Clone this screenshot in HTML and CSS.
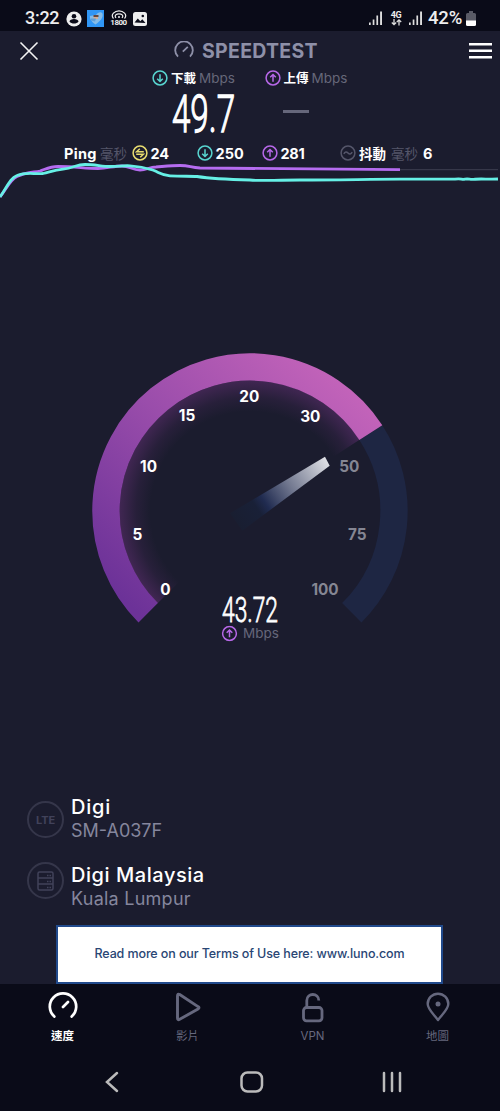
FILE: index.html
```html
<!DOCTYPE html>
<html lang="zh-Hant">
<head>
<meta charset="utf-8">
<title>Speedtest</title>
<link rel="stylesheet" href="styles.css">
</head>
<body>
<svg class="defs" width="0" height="0">
  <symbol id="down" viewBox="0 0 16 16"><circle cx="8" cy="8" r="6.9"/><path d="M8 4.2v7.2M5.2 8.7 8 11.5l2.8-2.8"/></symbol>
  <symbol id="up" viewBox="0 0 16 16"><circle cx="8" cy="8" r="6.9"/><path d="M8 11.8V4.6M5.2 7.3 8 4.5l2.8 2.8"/></symbol>
  <symbol id="swap" viewBox="0 0 16 16"><circle cx="8" cy="8" r="6.9"/><path d="M11.800 6.800H4.600L7.800 3.800M4.200 9.200h7.200l-3.200 3"/></symbol>
  <symbol id="wave" viewBox="0 0 16 16"><circle cx="8" cy="8" r="6.9"/><path d="M3.800 8.800c1.200-2.300 2.800-2.300 4.200-.8s3 1.500 4.200-.8"/></symbol>
</svg>
<div class="phone">
  <div class="status">
    <span class="clock">3:22</span>
    <svg class="s-user" width="16" height="16" viewBox="0 0 16 16"><circle cx="8" cy="8" r="7.600" fill="#eee"/><circle cx="8" cy="5.300" r="2.300" fill="#0a0b18"/><path d="M3.500 10.800c0-3.700 9-3.700 9 0-2 2.400-7 2.400-9 0z" fill="#0a0b18"/></svg>
    <svg class="s-app" width="17" height="17" viewBox="0 0 17 17"><rect width="17" height="17" fill="#3096f5"/><path d="M9 5c2-3 5-3.500 6.500-1.500 1 4-2 7.500-7 11C4.500 12 2.500 8.500 3 6z" fill="#86bce8"/><path d="M6.500 5h5v2h-5z" fill="#65483f"/><path d="M6.500 7h4.500v2H6.500z" fill="#d5ad93"/><path d="M4 8.500h5l-1 3-4-1z" fill="#5f9fd8"/></svg>
    <span class="s-wifi">
      <svg width="16" height="9" viewBox="0 0 16 9" fill="none" stroke="#eee" stroke-width="1.200"><path d="M2.500 8.500C-1 4.500 4 .8 8 .8s9 3.700 5.500 7.700M5 8C3 5.500 5.500 3.800 8 3.800S13 5.500 11 8"/><circle cx="8" cy="7" r="1" fill="#eee" stroke="none"/></svg>
      <span>1800</span>
    </span>
    <svg class="s-pic" width="14" height="14" viewBox="0 0 14 14"><rect width="14" height="14" rx="2.500" fill="#eee"/><path d="M1.500 10.500 4.800 6.500l2.500 2.800 2-2 3.200 3.700z" fill="#0a0b18"/><circle cx="9.800" cy="4" r="1.300" fill="#0a0b18"/></svg>
    <span class="grow"></span>
    <svg class="bars" width="14" height="15" viewBox="0 0 14 15" fill="#ddd"><path d="M0 11.500h1.700V14H0zM3.700 8.500h1.700V14H3.700zM7.400 4.500h1.700V14H7.400zM11.100.5h1.900V14h-1.900z"/></svg>
    <span class="lte"><span>4G</span><svg width="11" height="7" viewBox="0 0 11 7" fill="none" stroke="#ddd" stroke-width="1.300"><path d="M3 0v5.500M.8 3.500 3 5.700l2.200-2.200M8 6.500V1M5.800 3 8 .9 10.200 3"/></svg></span>
    <svg class="bars" width="14" height="15" viewBox="0 0 14 15" fill="#ddd"><path d="M0 11.500h1.700V14H0zM3.700 8.500h1.700V14H3.700zM7.400 4.500h1.700V14H7.400zM11.100.5h1.900V14h-1.900z"/></svg>
    <span class="percent">42%</span>
    <svg class="batt" width="10" height="15" viewBox="0 0 10 15"><path d="M3 0h4v2h1.500Q10 2 10 3.500V10H0V3.500Q0 2 1.500 2H3z" fill="#5a5b66"/><path d="M0 9.500h10v4q0 1.500-1.500 1.500h-7Q0 15 0 13.500z" fill="#fff"/></svg>
  </div>

  <header class="top">
    <svg width="20" height="20" viewBox="0 0 20 20" stroke="#f4f4f4" stroke-width="1.600"><path d="m1.500 1.500 17 17m0-17-17 17"/></svg>
    <div class="brand">
      <svg width="20" height="17" viewBox="0 0 20 17" fill="none" stroke="#8e90a8" stroke-width="1.800"><path d="M4 15.600A8.800 8.800 0 1 1 16 15.600M8.800 10.600l5-4.800"/></svg>
      <span>SPEEDTEST</span>
    </div>
    <svg class="menu" width="23" height="16" viewBox="0 0 23 16" fill="#fff"><path d="M0 0h23v2.500H0zM0 6.500h23V9H0zM0 13h23v2.500H0z"/></svg>
  </header>

  <div class="speeds">
    <div class="speed down">
      <div class="label"><svg class="ic teal"><use href="#down"/></svg><b>下載</b><span>Mbps</span></div>
      <svg class="big" width="66" height="42"><text x="1" y="38" textLength="63" lengthAdjust="spacingAndGlyphs">49.7</text></svg>
    </div>
    <div class="speed up">
      <div class="label"><svg class="ic purple"><use href="#up"/></svg><b>上傳</b><span>Mbps</span></div>
      <div class="dash"></div>
    </div>
  </div>

  <div class="ping">
    <b class="p-name">Ping</b><span class="p-unit">毫秒</span>
    <svg class="ic yellow"><use href="#swap"/></svg><b class="p-24">24</b>
    <svg class="ic teal"><use href="#down"/></svg><b class="p-250">250</b>
    <svg class="ic purple"><use href="#up"/></svg><b class="p-281">281</b>
    <svg class="ic grey"><use href="#wave"/></svg><b class="p-jit">抖動</b><span class="p-unit2">毫秒</span><b>6</b>
  </div>

  <svg class="graph" width="500" height="40" viewBox="0 160 500 40" fill="none" stroke-linejoin="round">
    <path d="M400 169.700H498" stroke="#3d3e50"/>
    <path d="M0 197C7 188 10 180 17 176.500C27 172 33 172.500 40 171C46 169 50 166.500 58 166.500C75 166.500 85 168.500 98 168.500C108 168 114 166 122 166C130 166 132 170 140 170C147 170 149 167 156 167C168 166 172 165.500 180 165.500C190 165.500 190 167.500 200 168C240 168.500 300 169 400 169.700" stroke="#b56cf0" stroke-width="2.800"/>
    <path d="M0 197C7 187 10 178 17 175.500C27 171.500 34 174.500 43 173.500C50 172 54 170 63 169.200C74 168 76 164.500 85 164.500C95 164.500 102 166.500 110 166.500C120 166.500 120 165.500 130 165.800C143 166.500 148 168.500 154 170.500C160 173 162 175.200 170 175.800C182 176.500 190 176 197 176.500C210 178.500 230 179.500 250 180C262 181.200 272 180 300 180C340 180 370 179.200 400 179.200H455C462 178.300 461 180 465 179.200S470 180 474 179.300S490 179.400 498 179" stroke="#66f0e6" stroke-width="2.800"/>
  </svg>

  <svg class="gauge" width="340" height="310" viewBox="80 340 340 310">
    <defs>
      <linearGradient id="fill" gradientUnits="userSpaceOnUse" x1="150" y1="625" x2="370" y2="400">
        <stop offset="0" stop-color="#6c3298"/><stop offset=".5" stop-color="#9a4dab"/><stop offset="1" stop-color="#c464ba"/>
      </linearGradient>
      <radialGradient id="glow" gradientUnits="userSpaceOnUse" cx="250" cy="511" r="131">
        <stop offset=".76" stop-color="#8c3b9c" stop-opacity="0"/><stop offset=".87" stop-color="#8c3b9c" stop-opacity=".11"/><stop offset="1" stop-color="#8c3b9c" stop-opacity=".34"/>
      </radialGradient>
      <linearGradient id="needle" gradientUnits="userSpaceOnUse" x1="236" y1="522" x2="327" y2="461">
        <stop offset="0" stop-color="#191e31"/><stop offset=".23" stop-color="#192037"/><stop offset=".32" stop-color="#202b50"/><stop offset=".6" stop-color="#747a91"/><stop offset="1" stop-color="#dedfe4"/>
      </linearGradient>
    </defs>
    <g fill="none" stroke-width="27.400">
      <path d="M370.800 432.600A144 144 0 0 1 351.800 612.800" stroke="#1e2643"/>
      <path d="M148.200 612.800A144 144 0 1 1 370.800 432.600" stroke="url(#fill)"/>
      <path d="M169.200 591.800A114.300 114.300 0 1 1 345.900 448.700" stroke="url(#glow)" stroke-width="32.500"/>
    </g>
    <path d="M325 456.700 329.700 465.700 242.300 530.700 230 513.300z" fill="url(#needle)"/>
    <g class="ticks">
      <text x="165.300" y="595">0</text><text x="137.500" y="540">5</text><text x="148.500" y="471.500">10</text>
      <text x="187" y="421">15</text><text x="249.300" y="401.500">20</text><text x="310.300" y="421.500">30</text>
      <g class="dim"><text x="349.300" y="471.500">50</text><text x="357.300" y="540">75</text><text x="325" y="595">100</text></g>
    </g>
    <text class="now" x="222" y="621.500" textLength="56" lengthAdjust="spacingAndGlyphs">43.72</text>
    <svg x="221.500" y="625.500" width="16" height="16" class="purple ics"><use href="#up"/></svg>
    <text class="unit" x="243" y="637.500" textLength="36">Mbps</text>
  </svg>

  <div class="hosts">
    <div class="host">
      <div class="ring">LTE</div>
      <div><div class="h-name">Digi</div><div class="h-sub model">SM-A037F</div></div>
    </div>
    <div class="host">
      <div class="ring"><svg width="17" height="20" viewBox="0 0 17 20" fill="none" stroke="#41425a" stroke-width="1.500"><rect x="1" y="1" width="15" height="18" rx="1.500"/><path d="M1 7h15M1 13h15M10 4.500h1.500m1 0H14M10 10.500h1.500m1 0H14M10 16.500h1.500m1 0H14"/></svg></div>
      <div><div class="h-name wide">Digi Malaysia</div><div class="h-sub city">Kuala Lumpur</div></div>
    </div>
  </div>

  <div class="ad"><span>Read more on our Terms of Use here: www.luno.com</span></div>

  <nav class="tabs">
    <div class="tab on"><svg width="34" height="32" viewBox="0 0 34 32"><path d="M8.300 25.500A13.200 13.200 0 1 1 25.700 25.500M17 16l5-5" stroke-width="2.700" stroke-linecap="round"/></svg><span>速度</span></div>
    <div class="tab"><svg width="34" height="32" viewBox="0 0 34 32"><path d="M6.500 5v22q0 2.500 2.200 1.300L27 18q2-1.200 0-2.400L8.700 3.500Q6.500 2.300 6.500 5z" stroke-width="2.900"/></svg><span>影片</span></div>
    <div class="tab"><svg width="34" height="32" viewBox="0 0 34 32"><rect x="7.500" y="16.500" width="18.500" height="13.300" rx="3" stroke-width="2.800"/><path d="M10.800 16V9.500c0-8 12-8 12 0" stroke-width="2.800"/></svg><span>VPN</span></div>
    <div class="tab"><svg width="34" height="32" viewBox="0 0 34 32"><path d="M17 29C13.500 24 6.700 18.500 6.700 13a10.300 10.300 0 0 1 20.600 0C27.300 18.500 20.500 24 17 29z" stroke-width="2.400"/><circle cx="17" cy="13" r="2.500" fill="#66687e" stroke="none"/></svg><span>地圖</span></div>
  </nav>
  <div class="sys">
    <svg width="14" height="22" viewBox="0 0 14 22"><path d="M12 2 2 11l10 9"/></svg>
    <svg width="24" height="22" viewBox="0 0 24 22"><rect x="1.500" y="1.500" width="20.500" height="19" rx="6"/></svg>
    <svg width="20" height="22" viewBox="0 0 20 22"><path d="M2 2v18M10 2v18M18 2v18"/></svg>
  </div>
</div>
</body>
</html>
```
FILE: styles.css
```css
* { box-sizing: border-box; }
body { margin: 0; background: #1b1c2e; font-family: Inter, "Noto Sans CJK TC", sans-serif; }
svg { display: block; flex: none; }
.defs { position: absolute; }
.phone { width: 500px; height: 1111px; display: flex; flex-direction: column; overflow: hidden; color: #fff; }
.grow { flex: 1; }

.status { height: 31px; background: #0a0b18; display: flex; align-items: center; padding: 6px 24px 0 25px; color: #eee; font-family: Roboto, sans-serif; }
.clock { font-size: 18px; line-height: 18px; width: 41px; font-weight: 500; margin-top: -2px; letter-spacing: -.3px; }
.s-app { margin-left: 5px; }
.s-wifi { width: 17px; margin-left: 6px; display: flex; flex-direction: column; align-items: center; }
.s-wifi span { font-size: 8px; line-height: 8px; font-weight: 700; letter-spacing: -.5px; }
.s-pic { margin-left: 6px; }
.lte { width: 12px; margin: 0 7px; display: flex; flex-direction: column; align-items: center; }
.lte span { font-size: 9px; line-height: 8px; font-weight: 700; letter-spacing: -.3px; }
.percent { font-size: 18.500px; line-height: 18px; font-weight: 500; margin-left: 5px; margin-top: -2px; width: 37px; letter-spacing: -.2px; }
.batt { margin-left: 1px; }

.top { height: 38px; display: flex; align-items: center; padding: 1px 8px 0 19px; }
.brand { display: flex; align-items: center; gap: 8px; color: #8e90a8; font-size: 19.500px; font-weight: 700; width: 295px; margin-left: 135px; letter-spacing: .3px; }
.brand svg { margin-top: -2px; }

.speeds { height: 75px; display: flex; padding-left: 152px; }
.speed { width: 112.500px; }
.label { display: flex; align-items: center; height: 17px; font-size: 12.500px; white-space: nowrap; }
.label b { margin-left: 3px; }
.label span { color: #666779; font-size: 13.500px; margin-left: 3px; }
.ic { width: 16px; height: 16px; fill: none; stroke-width: 1.500; }
.teal { stroke: #58d5d0; }
.purple { stroke: #b768e8; }
.yellow { stroke: #e8dc70; }
.grey { stroke: #55566a; }
.big { margin: 8px 0 0 19px; overflow: visible; }
.big text { font: 300 52px Roboto, sans-serif; fill: #fff; stroke: #fff; stroke-width: 1.300px; }
.dash { width: 26px; height: 3px; background: #66677b; margin: 24px 0 0 18.500px; }

.ping { height: 16px; display: flex; align-items: center; padding-left: 64px; margin-top: 1px; font-size: 14.500px; white-space: nowrap; }
.ping b { margin-left: 3px; }
.ping .p-name { margin: 0; width: 36px; letter-spacing: .3px; }
.p-unit, .p-unit2 { color: #55566a; font-size: 13.500px; }
.p-unit { width: 31.500px; }
.ping .p-24 { width: 46px; letter-spacing: -.1px; }
.ping .p-250 { width: 46px; }
.ping .p-281 { width: 59.500px; letter-spacing: -.3px; }
.ping .p-jit { width: 32px; font-size: 13.500px; }
.p-unit2 { width: 29px; }
.graph { margin-top: -1px; }

.gauge { margin: 140px 0 0 80px; }
.ticks text { font: 700 15.300px Inter, sans-serif; text-anchor: middle; fill: #fff; }
.ticks .dim text { fill: #858693; }
.now { font: 300 34.500px Roboto, sans-serif; fill: #fff; stroke: #fff; stroke-width: .8px; }
.ics { fill: none; stroke-width: 1.500; }
.unit { font-size: 13.500px; fill: #66677b; }

.hosts { padding: 145px 0 0 27px; height: 275px; }
.host { display: flex; gap: 7px; height: 68px; }
.ring { width: 37px; height: 37px; margin-top: 6px; border: 2px solid #35364a; border-radius: 50%; display: flex; align-items: center; justify-content: center; color: #41425a; font-size: 11px; font-weight: 700; letter-spacing: -.1px; }
.host + .host .ring { margin-top: -1px; }
.h-name { font-size: 20px; line-height: 24px; font-weight: 500; letter-spacing: .8px; }
.wide { letter-spacing: .55px; }
.h-sub { font-size: 18px; line-height: 24px; color: #85869d; }
.city { letter-spacing: .25px; }

.ad { width: 387px; height: 59px; margin-left: 56px; background: #fff; border: 2px solid #214a8c; display: flex; align-items: center; justify-content: center; color: #294674; font: 500 12.500px Inter, sans-serif; letter-spacing: -.11px; white-space: nowrap; padding-bottom: 2px; }

.tabs { height: 72px; background: #0a0b18; display: grid; grid-template-columns: repeat(4, 125px); padding-top: 7px; }
.tab { display: flex; flex-direction: column; align-items: center; color: #66687e; font-size: 11.500px; line-height: 16px; gap: 5px; }
.tab svg { fill: none; stroke: #66687e; stroke-linejoin: round; }
.tab.on { color: #fff; font-weight: 700; }
.tab.on svg { stroke: #fff; }
.sys { flex: 1; background: #0a0b18; display: flex; justify-content: space-between; padding: 15px 98px 0 105px; }
.sys svg { fill: none; stroke: #bbb; stroke-width: 2.500; stroke-linecap: round; }
.sys svg:nth-child(2) { margin-left: 2px; }
```
